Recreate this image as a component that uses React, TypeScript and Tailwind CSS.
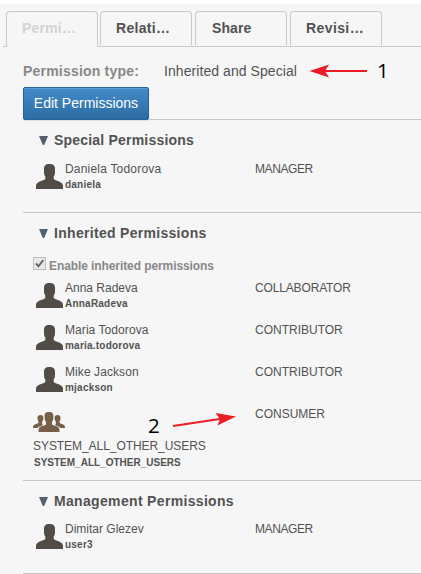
import React from "react";

function PersonIcon() {
  return (
    <svg className="block h-[25px] w-[27px] shrink-0" viewBox="0 0 27 25" fill="#514d46">
      <path d="M13.500 0C9.500 0 8 1.500 8 5v3c0 2.500.5 3.500 1.300 4.500V15C8 16.500 4 17 1.700 18.700.3 19.700 0 20.500 0 22v3h27v-3c0-1.500-.3-2.300-1.700-3.300C23 17 19 16.500 17.700 15v-2.500C18.500 11.500 19 10.500 19 8V5c0-3.500-1.500-5-5.500-5z" />
    </svg>
  );
}

function GroupIcon() {
  return (
    <svg className="block h-5 w-8" viewBox="0 0 32 20" fill="#765f46">
      <path d="M7.500 3C5.300 3 4.300 4.200 4.500 6.500c.1 1.500.6 2.300 1 3v1.300C4.500 12 2 12.300.7 13.300 0 13.800 0 14.500 0 16h4.500c1-1.400 3-1.800 4.800-2.500l.4-.8-.5-1.200V9.500c.9-1 1.200-2.500 1.200-3.500C10.500 4 9.500 3 7.500 3z" />
      <path d="M24.500 3c2.200 0 3.200 1.200 3 3.500-.1 1.500-.6 2.300-1 3v1.300c1 1.200 3.500 1.500 4.800 2.500.7.500.7 1.200.7 2.700h-4.500c-1-1.400-3-1.800-4.800-2.500l-.4-.8.5-1.200V9.500c-.9-1-1.200-2.500-1.200-3.500 0-2 1-3 2.900-3z" />
      <path d="M16 0c-3.300 0-4.500 1.300-4.400 4.500 0 2.300.4 4.400 1.400 5.500v2.300c-.8 1.400-4.600 1.600-6.300 2.900-.9.700-1.200 1.800-1.200 4.800h21c0-3-.3-4.100-1.200-4.800-1.700-1.300-5.500-1.500-6.300-2.900V10c1-1.100 1.400-3.200 1.400-5.500C20.500 1.300 19.300 0 16 0z" />
    </svg>
  );
}

function Tab({ label, style }: { label: string; style: string }) {
  return (
    <div className={"w-[92px] shrink-0 rounded-t-[4px] border border-b-0 border-[#c9c9c9] text-[14px] leading-[16px] font-bold whitespace-nowrap " + style}>
      {label}
    </div>
  );
}

function Heading({ children, spacing }: { children: string; spacing: string }) {
  return (
    <h2 className="flex h-4 items-center pl-4 text-[14px] leading-4 font-bold whitespace-nowrap">
      <svg className="mr-[6px] h-[9px] w-[9px] shrink-0" viewBox="0 0 9 9" fill="#53606e">
        <path d="M0 0h9L5.200 9H3.800z" />
      </svg>
      <span className={spacing}>{children}</span>
    </h2>
  );
}

type PersonProps = { name: string; login: string; role: string; spacing: string; roleSpacing: string };

function Person({ name, login, role, spacing, roleSpacing }: PersonProps) {
  return (
    <div className="flex h-[42px] pl-[13px]">
      <div className="pt-[3px]"><PersonIcon /></div>
      <div className="w-[192px] shrink-0 pl-[2px] whitespace-nowrap">
        <div className="text-[12px] leading-4"><span className={spacing}>{name}</span></div>
        <div className="text-[10px] leading-4 font-bold tracking-[0.22px]">{login}</div>
      </div>
      <div className={"text-[12px] leading-4 " + roleSpacing}>{role}</div>
    </div>
  );
}

export default function App() {
  return (
    <div className="relative h-[574px] w-[421px] overflow-hidden border-t-4 border-white bg-[#f6f6f6] font-['Liberation_Sans',Arial,sans-serif] text-[#525252]">
      <nav className="flex h-[43px] pt-[7px]">
        <div className="w-[6px] shrink-0 pt-[35px] pl-[3px]"><div className="h-px bg-[#c9c9c9]" /></div>
        <Tab label="Permi…" style="h-9 pt-[8px] pl-[15px] text-[#d2d2d2] tracking-[0.2px]" />
        <div className="flex h-9 flex-1 border-b border-[#c9c9c9] pl-[2px]">
          <Tab label="Relati…" style="h-[34px] pt-[8px] pl-[15px] mr-[3px] tracking-[0.3px]" />
          <Tab label="Share" style="h-[34px] pt-[8px] pl-[16px] mr-[3px] tracking-[0.1px]" />
          <Tab label="Revisi…" style="h-[34px] pt-[8px] pl-[15px] tracking-[0.4px]" />
        </div>
      </nav>

      <main className="pl-[23px]">
        <section className="h-[73px] border-b border-[#c9c9c9] pt-4">
          <div className="flex h-6 text-[14px] leading-4 whitespace-nowrap">
            <span className="w-[141px] font-bold tracking-[0.2px] text-[#888]">Permission type:</span>
            <span className="tracking-[0.07px]">Inherited and Special</span>
          </div>
          <button className="relative block h-[33px] w-[126px] rounded-[2px] border border-[#2362a0] bg-linear-to-b from-[#428bca] to-[#2d6ca2] text-center text-[14px] leading-[31px] whitespace-nowrap text-white shadow-[inset_0_1px_0_#5b9bd3,0_1px_1px_#ddd]">
            Edit Permissions
          </button>
        </section>

        <section className="h-[93px] border-b border-[#c9c9c9] pt-[12px]">
          <Heading spacing="tracking-[0.2px]">Special Permissions</Heading>
          <div className="pt-[13px]">
            <Person name="Daniela Todorova" login="daniela" role="MANAGER" spacing="tracking-[0.2px]" roleSpacing="tracking-[-0.4px]" />
          </div>
        </section>

        <section className="h-[268px] border-b border-[#c9c9c9] pt-[12px]">
          <Heading spacing="tracking-[0.3px]">Inherited Permissions</Heading>
          <div className="flex h-[39px] pt-4 pl-[10px]">
            <svg className="block h-[13px] w-[13px] shrink-0" viewBox="0 0 13 13">
              <rect x=".5" y=".5" width="12" height="12" fill="#e9e9e9" stroke="#bcbcbc" />
              <path d="M3 6.500 5.500 9.300 10.300 3" fill="none" stroke="#666" strokeWidth="2" />
            </svg>
            <span className="pt-px pl-[3px] text-[12px] leading-4 font-bold tracking-[-0.09px] whitespace-nowrap text-[#888]">Enable inherited permissions</span>
          </div>
          <Person name="Anna Radeva" login="AnnaRadeva" role="COLLABORATOR" spacing="" roleSpacing="tracking-[-0.15px]" />
          <Person name="Maria Todorova" login="maria.todorova" role="CONTRIBUTOR" spacing="tracking-[0.07px]" roleSpacing="" />
          <Person name="Mike Jackson" login="mjackson" role="CONTRIBUTOR" spacing="tracking-[0.08px]" roleSpacing="" />
          <div className="flex pl-[10px]">
            <div className="w-[222px] pt-[6px]">
              <GroupIcon />
              <div className="pt-[6px] text-[12px] leading-4 tracking-[-0.06px]">SYSTEM_ALL_OTHER_USERS</div>
              <div className="pt-px pl-px text-[10px] leading-4 font-bold">SYSTEM_ALL_OTHER_USERS</div>
            </div>
            <div className="text-[12px] leading-4">CONSUMER</div>
          </div>
        </section>

        <section className="h-[93px] border-b border-[#c9c9c9] pt-[12px]">
          <Heading spacing="tracking-[0.33px]">Management Permissions</Heading>
          <div className="pt-[12px]">
            <Person name="Dimitar Glezev" login="user3" role="MANAGER" spacing="" roleSpacing="tracking-[-0.4px]" />
          </div>
        </section>
      </main>

      <div className="absolute top-[54px] left-[308px] flex items-center font-['Open_Sans',sans-serif] text-[20.5px] leading-[26px] text-black">
        <svg className="h-[14px] w-[59px]" viewBox="0 0 59 14">
          <path d="M14 7H59" stroke="#ed1c24" strokeWidth="2" />
          <path d="M1.500 7 21 .5 17 7 21 13.500z" fill="#ed1c24" />
        </svg>
        <span className="-mt-px pl-[10px]">1</span>
      </div>
      <div className="absolute top-[408px] left-[148px] flex font-['Open_Sans',sans-serif] text-[20.5px] leading-[26px] text-black">
        <span className="w-[25px]">2</span>
        <svg className="h-[16px] w-[64px]" viewBox="0 0 64 16">
          <path d="M0 14 50 6.500" stroke="#ed1c24" strokeWidth="2" />
          <path d="M63 4.500 42.500 1 47 7 44.500 13.500z" fill="#ed1c24" />
        </svg>
      </div>
    </div>
  );
}
